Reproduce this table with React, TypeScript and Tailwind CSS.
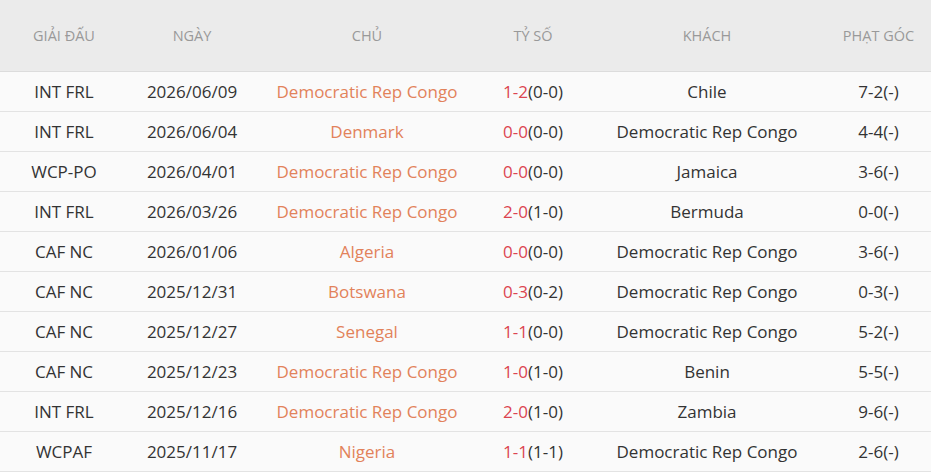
import * as React from "react";

type Match = {
  league: string;
  date: string;
  home: string;
  score: string;
  half: string;
  away: string;
  corner: string;
};

const matches: Match[] = [
  { league: "INT FRL", date: "2026/06/09", home: "Democratic Rep Congo", score: "1-2", half: "(0-0)", away: "Chile", corner: "7-2(-)" },
  { league: "INT FRL", date: "2026/06/04", home: "Denmark", score: "0-0", half: "(0-0)", away: "Democratic Rep Congo", corner: "4-4(-)" },
  { league: "WCP-PO", date: "2026/04/01", home: "Democratic Rep Congo", score: "0-0", half: "(0-0)", away: "Jamaica", corner: "3-6(-)" },
  { league: "INT FRL", date: "2026/03/26", home: "Democratic Rep Congo", score: "2-0", half: "(1-0)", away: "Bermuda", corner: "0-0(-)" },
  { league: "CAF NC", date: "2026/01/06", home: "Algeria", score: "0-0", half: "(0-0)", away: "Democratic Rep Congo", corner: "3-6(-)" },
  { league: "CAF NC", date: "2025/12/31", home: "Botswana", score: "0-3", half: "(0-2)", away: "Democratic Rep Congo", corner: "0-3(-)" },
  { league: "CAF NC", date: "2025/12/27", home: "Senegal", score: "1-1", half: "(0-0)", away: "Democratic Rep Congo", corner: "5-2(-)" },
  { league: "CAF NC", date: "2025/12/23", home: "Democratic Rep Congo", score: "1-0", half: "(1-0)", away: "Benin", corner: "5-5(-)" },
  { league: "INT FRL", date: "2025/12/16", home: "Democratic Rep Congo", score: "2-0", half: "(1-0)", away: "Zambia", corner: "9-6(-)" },
  { league: "WCPAF", date: "2025/11/17", home: "Nigeria", score: "1-1", half: "(1-1)", away: "Democratic Rep Congo", corner: "2-6(-)" },
];

const cols = "grid grid-cols-[128px_128px_222px_110px_238px_105px]";

export default function App() {
  return (
    <div className="w-[931px] h-[475px] bg-white font-['Open_Sans',sans-serif] overflow-hidden">
      {/* Header */}
      <div className={`${cols} h-[72px] bg-[#ebebeb] border-b border-[#dcdcdc] text-[14.5px] text-[#999999] items-center text-center`}>
        <div>GIẢI ĐẤU</div>
        <div>NGÀY</div>
        <div>CHỦ</div>
        <div>TỶ SỐ</div>
        <div>KHÁCH</div>
        <div>PHẠT GÓC</div>
      </div>

      {matches.map((m, i) => (
        <div
          key={i}
          className={`${cols} h-[40px] bg-[#fafafa] border-b border-[#e3e3e3] text-[17px] text-[#333333] items-center text-center`}
        >
          <div>{m.league}</div>
          <div>{m.date}</div>
          <div className="text-[#e2825a]">{m.home}</div>
          <div>
            <span className="text-[#dc4550]">{m.score}</span>
            {m.half}
          </div>
          <div>{m.away}</div>
          <div>{m.corner}</div>
        </div>
      ))}
    </div>
  );
}
